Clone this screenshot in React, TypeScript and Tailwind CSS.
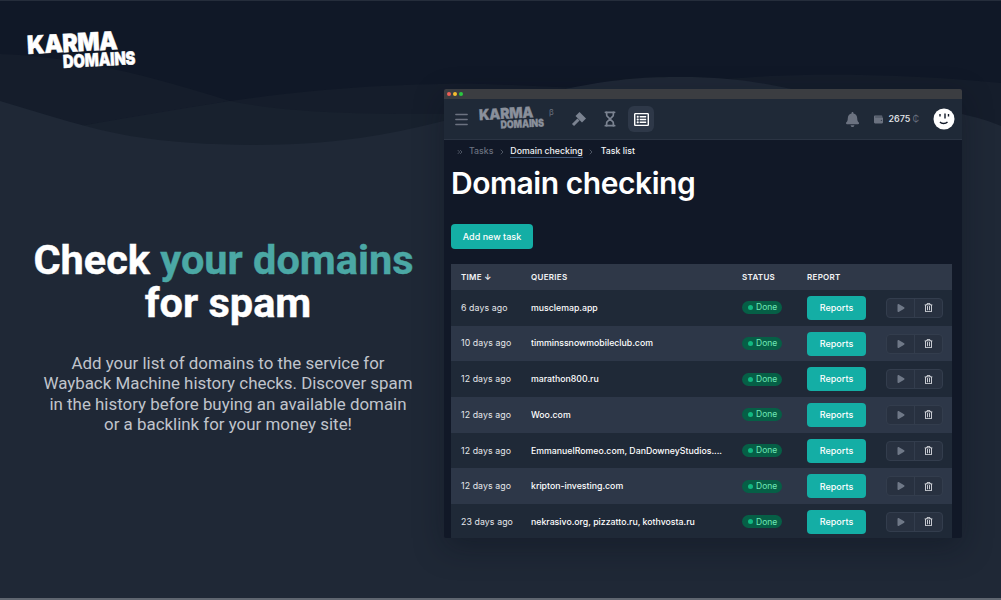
import { ChevronRight, ChevronsRight, Hourglass, Menu } from 'lucide-react';
import { FaBell, FaPlay, FaRegListAlt, FaRegTrashAlt, FaWallet } from 'react-icons/fa';

const rows = [
    { time: '6 days ago', query: 'musclemap.app' },
    { time: '10 days ago', query: 'timminssnowmobileclub.com' },
    { time: '12 days ago', query: 'marathon800.ru' },
    { time: '12 days ago', query: 'Woo.com' },
    { time: '12 days ago', query: 'EmmanuelRomeo.com, DanDowneyStudios....' },
    { time: '12 days ago', query: 'kripton-investing.com' },
    { time: '23 days ago', query: 'nekrasivo.org, pizzatto.ru, kothvosta.ru' },
];

const Waves = () => (
    <svg className="absolute inset-0" width="1001" height="600" viewBox="0 0 1001 600">
        <path d="M0 53 C60 55 130 68 230 100 C300 114 380 113 500 113 L1001 113 L1001 300 L0 300 Z" fill="#151d2b" />
        <path d="M80 125 C130 116 180 108 230 100 C300 90 370 84 440 83 C500 82 540 86 600 88 C650 88 690 80 740 77 C800 72 900 72 1001 82 L1001 300 L80 300 Z" fill="#151d2b" />
        <path d="M230 100 C300 114 380 113 500 113 L700 113 L700 300 L80 300 L80 125 C130 116 180 108 230 100 Z" fill="#18212e" />
        <path d="M0 100 C50 115 90 128 130 135 C200 146 290 147 360 137 C440 125 510 100 570 87 C620 77 650 76 680 76 C730 76 760 81 800 90 C860 100 920 106 962 113 C975 116 990 120 1001 125 L1001 600 L0 600 Z" fill="#1f2836" />
    </svg>
);

const Logo = ({ className }: { className: string }) => (
    <div className={`flex flex-col items-start font-['Inter',sans-serif] font-black [-webkit-text-stroke:0.5px] ${className}`}>
        <span className="block -rotate-3 origin-left scale-x-[0.93] text-[25px] leading-[20px] tracking-[-0.5px]">KARMA</span>
        <span className="block ml-[36px] -rotate-3 origin-left scale-x-[0.82] text-[18px] leading-[14px] tracking-[-0.2px]">DOMAINS</span>
    </div>
);

const TableRow = ({ time, query, odd }: { time: string; query: string; odd: boolean }) => (
    <div className={`flex items-center h-[35.7px] text-[8.75px] ${odd ? 'bg-[#2d3748]' : 'bg-[#1f2937]'}`}>
        <div className="w-[80px] pl-[10px] pt-[1px] tracking-[0.1px] text-[#e5e7eb]">{time}</div>
        <div className="w-[211px] pt-[1px] font-medium whitespace-nowrap overflow-hidden text-white">{query}</div>
        <div className="w-[65px]">
            <span className="inline-flex items-center gap-[3px] w-[40px] h-[13px] pl-[6px] rounded-full bg-[#065f46] text-[8.5px] text-[#6ee7b7]">
                <span className="w-[5px] h-[5px] rounded-full bg-[#10b981]" />
                Done
            </span>
        </div>
        <button className="flex items-center justify-center w-[59px] h-[24px] rounded-[4px] bg-[#14aea5] text-[9px] font-medium text-white">
            Reports
        </button>
        <div className="flex ml-[20px] h-[20px] w-[57px] rounded-[4px] border border-[#333d4d] bg-[#283140]">
            <span className="flex flex-1 items-center justify-center border-r border-[#333d4d] text-[#6f7887]">
                <FaPlay size={8} />
            </span>
            <span className="flex flex-1 items-center justify-center text-[#e5e7eb]">
                <FaRegTrashAlt size={9} />
            </span>
        </div>
    </div>
);

const Window = () => (
    <div className="flex flex-col w-[518px] h-[449px] overflow-hidden rounded-[2px] bg-[#111827] font-['Inter',sans-serif] shadow-[0_10px_30px_rgba(10,15,25,0.35)]">
        {/* Title bar */}
        <div className="flex items-center gap-[2px] shrink-0 h-[10px] pl-[3px] bg-[#3b3d41]">
            <span className="w-[4px] h-[4px] rounded-full bg-[#ec5f57]" />
            <span className="w-[4px] h-[4px] rounded-full bg-[#f5bd2f]" />
            <span className="w-[4px] h-[4px] rounded-full bg-[#2ac940]" />
        </div>

        {/* App header */}
        <div className="flex items-center shrink-0 h-[41px] pl-[9px] pr-[7px] bg-[#1f2937] border-b border-[#2b3443]">
            <Menu size={17} strokeWidth={2} className="text-[#6b7280]" />
            <div className="relative ml-[9px] w-[72px] h-[34px] text-[#8a909b]">
                <Logo className="scale-[0.6] origin-left" />
                <span className="absolute top-[4px] left-[70px] text-[8px] text-[#6b7280]">β</span>
            </div>
            <svg className="ml-[20px] text-[#7b8391]" width="16" height="16" viewBox="0 0 16 16">
                <path d="M8.5 1 L15 7.5 L11 11.5 L4.5 5 Z" fill="currentColor" />
                <path d="M7.5 8.5 L2 14" stroke="currentColor" strokeWidth="3" />
            </svg>
            <Hourglass size={16} strokeWidth={2.5} className="ml-[15px] text-[#7b8391]" />
            <div className="flex items-center justify-center ml-[10px] w-[26px] h-[26px] rounded-[6px] bg-[#2e3848] text-white">
                <FaRegListAlt size={15} />
            </div>
            <FaBell size={15} className="ml-auto text-[#6b7280]" />
            <FaWallet size={9} className="ml-[14px] text-[#6b7280]" />
            <span className="ml-[6px] text-[9px] font-medium text-[#e5e7eb]">2675</span>
            <span className="ml-[2px] text-[9px] text-[#6b7280]">₵</span>
            <svg className="ml-[14px]" width="22" height="22" viewBox="0 0 22 22">
                <circle cx="11" cy="11" r="10.5" fill="#fff" />
                <path d="M7 6v2.5M12 5.5v5M15.5 6v2.5" stroke="#111827" strokeWidth="1.4" />
                <path d="M7 14c1.5 2 5.5 2 7.5 0" stroke="#111827" strokeWidth="1.4" fill="none" />
            </svg>
        </div>

        {/* Breadcrumbs */}
        <div className="flex items-center shrink-0 h-[20px] pt-[3px] pl-[12px] text-[8.75px] font-medium">
            <ChevronsRight size={8} className="text-[#6b7280]" />
            <span className="ml-[5px] text-[#6b7280]">Tasks</span>
            <ChevronRight size={8} className="ml-[5px] text-[#6b7280]" />
            <span className="ml-[4px] border-b border-[#3f5678] text-[#f3f4f6] leading-[11px]">Domain checking</span>
            <ChevronRight size={8} className="ml-[4px] text-[#6b7280]" />
            <span className="ml-[6px] text-[#f3f4f6]">Task list</span>
        </div>

        <h2 className="ml-[7px] mt-[3px] text-[30px] leading-[40px] font-semibold tracking-[-0.45px] text-white">Domain checking</h2>

        <button className="flex items-center justify-center shrink-0 ml-[7px] mt-[21px] w-[82px] h-[25px] rounded-[4px] bg-[#14aea5] text-[9px] font-medium text-white">
            Add new task
        </button>

        {/* Table */}
        <div className="flex flex-col ml-[7px] mt-[15px] w-[501px]">
            <div className="flex items-center h-[26px] bg-[#2f3848] text-[8px] font-semibold tracking-[0.3px] text-[#f3f4f6]">
                <div className="w-[80px] pl-[10px]">TIME ↓</div>
                <div className="w-[211px]">QUERIES</div>
                <div className="w-[65px]">STATUS</div>
                <div>REPORT</div>
            </div>
            {rows.map((row, idx) => (
                <TableRow key={idx} time={row.time} query={row.query} odd={idx % 2 === 1} />
            ))}
        </div>
    </div>
);

export default function App() {
    return (
        <div className="relative flex w-[1001px] h-[600px] overflow-hidden bg-[#101827] font-['Roboto',sans-serif] border-t border-b-2 border-t-[#252d3b] border-b-[#5f6670]">
            <Waves />

            <div className="relative flex flex-col w-[444px] shrink-0">
                <Logo className="ml-[27px] mt-[34px] w-fit text-white" />

                <h1 className="mt-[169px] pl-[3px] text-center text-[41.5px] leading-[43px] font-bold [-webkit-text-stroke:0.4px] text-white">
                    Check <span className="text-[#4ba8a5]">your domains</span>
                    <span className="block pl-[9px]">for spam</span>
                </h1>

                <p className="mt-[29px] ml-[40px] w-[376px] text-center text-[16.9px] leading-[20.4px] text-[#c0c4cc]">
                    Add your list of domains to the service for Wayback Machine history checks. Discover spam in the history before buying an available domain or a backlink for your money site!
                </p>
            </div>

            <div className="relative pt-[88px]">
                <Window />
            </div>
        </div>
    );
}
